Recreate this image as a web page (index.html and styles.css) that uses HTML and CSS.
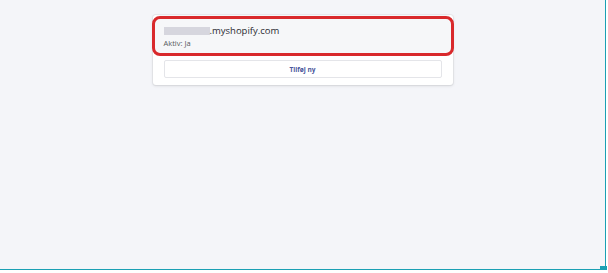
FILE: index.html
```html
<!DOCTYPE html>
<html>
  <head>
    <title>Butikker</title>
    <link rel="stylesheet" href="styles.css">
  </head>
  <body>
    <div class="frame">
      <div class="card">
        <div class="shop-item">
          <div class="shop-name"><span class="blur"></span>.myshopify.com</div>
          <div class="shop-status">Aktiv: Ja</div>
        </div>
        <div class="card-footer">
          <button type="button" class="add-button">Tilføj ny</button>
        </div>
      </div>
      <div class="resize-handle"></div>
    </div>
  </body>
</html>
```

FILE: styles.css
```css
html, body {
  margin: 0;
  padding: 0;
  background: #fff;
}

.frame {
  position: relative;
  width: 606px;
  height: 270px;
  padding-top: 15px;
  box-sizing: border-box;
  background-color: #f4f5f9;
  border-right: 1px solid #1aa0b4;
  border-bottom: 1px solid #1aa0b4;
  font-family: "Open Sans", "Liberation Sans", sans-serif;
}

.card {
  width: 300px;
  margin: 0 auto;
  background: #fff;
  border-radius: 3px;
  box-shadow: 0 0 0 1px rgba(63, 63, 68, 0.05), 0 1px 3px rgba(63, 63, 68, 0.15);
}

.shop-item {
  position: relative;
  height: 41px;
  padding: 10px 11px 0;
  box-sizing: border-box;
  background: #f6f7f9;
  border-radius: 8px;
}

.shop-item::after {
  content: "";
  position: absolute;
  top: 1px;
  left: -1px;
  right: -1px;
  bottom: 0;
  border: 3px solid #d9292c;
  border-radius: 8px;
}

.shop-name {
  font-size: 9.5px;
  line-height: 12px;
  color: #2b2b33;
  display: flex;
  align-items: center;
}

.blur {
  display: inline-block;
  width: 46px;
  height: 8px;
  background: #d6d6de;
}

.shop-status {
  margin-top: 2px;
  font-size: 7.5px;
  line-height: 9px;
  color: #55585c;
}

.card-footer {
  padding: 4px 11px 7px;
}

.add-button {
  display: block;
  width: 100%;
  height: 18px;
  padding: 0;
  background: #fff;
  border: 1px solid #e4e5e9;
  border-radius: 2px;
  font-family: "Open Sans", "Liberation Sans", sans-serif;
  font-size: 6.5px;
  font-weight: bold;
  color: #4a579c;
  cursor: pointer;
}

.resize-handle {
  position: absolute;
  right: -2px;
  bottom: -4px;
  width: 7px;
  height: 7px;
  background: #1aa0b4;
}
```
